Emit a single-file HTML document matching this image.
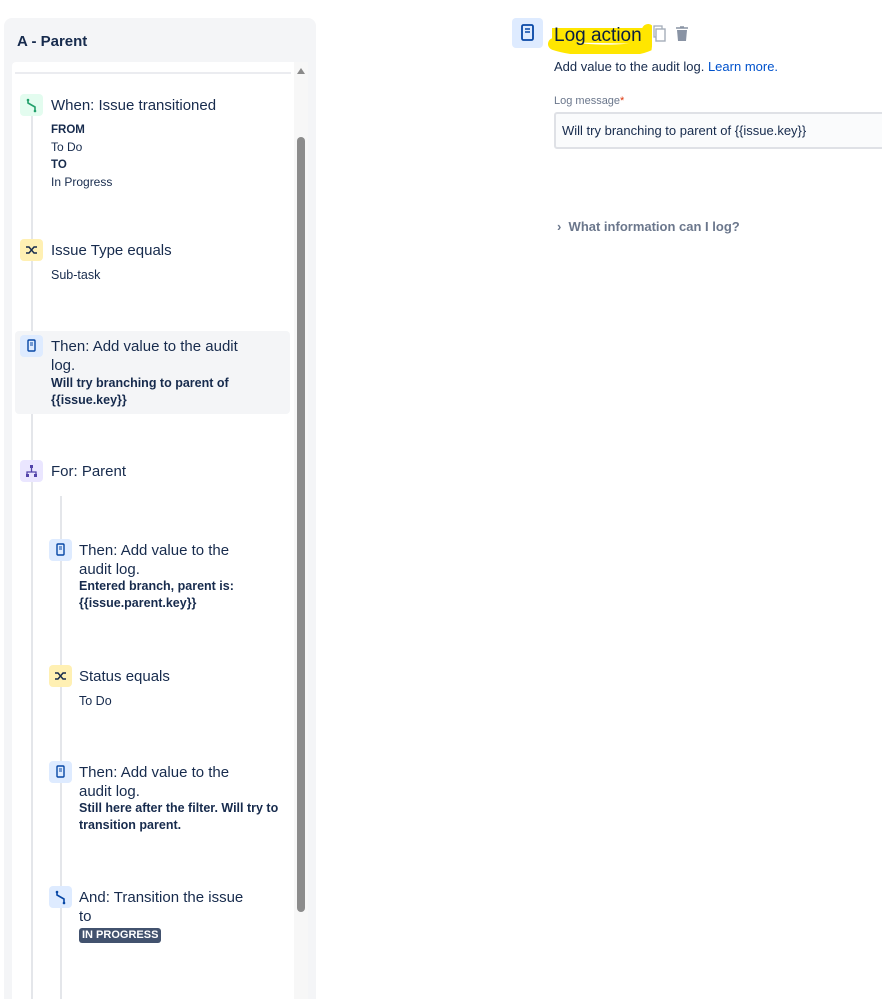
<!DOCTYPE html>
<html><head><style>
html,body{margin:0;width:882px;height:999px;overflow:hidden}
body{background:#fff;font-family:"Liberation Sans",Arial,sans-serif;color:#172b4d;position:relative}
.a{position:absolute}
.ic{position:absolute;width:23px;height:22px;border-radius:4px}
.t{position:absolute;font-size:15px;line-height:19px;color:#172b4d}
.s{position:absolute;font-size:12.5px;line-height:17px;color:#172b4d}
.b{font-weight:bold}
</style></head><body>
<div class="a" style="left:4px;top:18px;width:312px;height:981px;background:#f4f5f7;border-radius:8px 8px 0 0"></div>
<div class="a" style="left:17px;top:33px;font-size:15px;font-weight:bold;color:#172b4d">A - Parent</div>
<div class="a" style="left:12px;top:62px;width:296px;height:937px;background:#fff;border-radius:4px 0 0 0"></div>
<div class="a" style="left:15px;top:72px;width:276px;height:2px;background:#ebecf0"></div>
<div class="a" style="left:294px;top:62px;width:14px;height:937px;background:#f7f7f7"></div>
<div class="a" style="left:297px;top:68px;width:0;height:0;border-left:4px solid transparent;border-right:4px solid transparent;border-bottom:6px solid #8a8a8a"></div>
<div class="a" style="left:297px;top:137px;width:8px;height:775px;background:#8c8c8c;border-radius:4px"></div>
<div class="a" style="left:31px;top:112px;width:2px;height:887px;background:#e4e6ea"></div>
<div class="a" style="left:60px;top:496px;width:2px;height:503px;background:#e4e6ea"></div>
<div class="a" style="left:15px;top:331px;width:275px;height:83px;background:#f4f5f7;border-radius:4px"></div>

<div class="ic" style="left:20px;top:94px;background:#e3fcef"><svg width="23" height="22"><path d="M8 6v3l7 4v4" stroke="#22a06b" stroke-width="1.6" fill="none"/><circle cx="8" cy="6" r="1.3" fill="#22a06b"/><circle cx="15" cy="17" r="1.3" fill="#22a06b"/></svg></div>
<div class="t" style="left:51px;top:96px">When: Issue transitioned</div>
<div class="s" style="left:51px;top:121px;font-size:12px"><span class="b" style="font-size:11.5px">FROM</span><br>To Do<br><span class="b" style="font-size:11.5px">TO</span><br>In Progress</div>

<div class="ic" style="left:20px;top:239px;background:#fff0b3"><svg width="23" height="22"><path d="M6 8h3l5 6h3M6 14h3l5-6h3" stroke="#172b4d" stroke-width="1.4" fill="none"/></svg></div>
<div class="t" style="left:51px;top:241px">Issue Type equals</div>
<div class="s" style="left:51px;top:267px">Sub-task</div>

<div class="ic" style="left:20px;top:335px;background:#deebff"><svg width="23" height="22"><rect x="8" y="5" width="7" height="11" rx="1" stroke="#0747a6" stroke-width="1.4" fill="none"/><path d="M10 8h3M10 10h3" stroke="#0747a6" stroke-width="1"/></svg></div>
<div class="t" style="left:51px;top:337px;width:200px">Then: Add value to the audit log.</div>
<div class="s b" style="left:51px;top:375px;width:220px">Will try branching to parent of {{issue.key}}</div>

<div class="ic" style="left:20px;top:460px;background:#eae6ff"><svg width="23" height="22"><path d="M11.5 6v4M7 14v-2h9v2M11.5 10v2" stroke="#5243aa" stroke-width="1.3" fill="none"/><rect x="10" y="5" width="3" height="3" fill="#5243aa"/><rect x="6" y="14" width="3" height="3" fill="#5243aa"/><rect x="14" y="14" width="3" height="3" fill="#5243aa"/></svg></div>
<div class="t" style="left:51px;top:462px">For: Parent</div>

<div class="ic" style="left:49px;top:539px;background:#deebff"><svg width="23" height="22"><rect x="8" y="5" width="7" height="11" rx="1" stroke="#0747a6" stroke-width="1.4" fill="none"/><path d="M10 8h3M10 10h3" stroke="#0747a6" stroke-width="1"/></svg></div>
<div class="t" style="left:79px;top:541px;width:170px">Then: Add value to the audit log.</div>
<div class="s b" style="left:79px;top:578px;width:200px">Entered branch, parent is: {{issue.parent.key}}</div>

<div class="ic" style="left:49px;top:665px;background:#fff0b3"><svg width="23" height="22"><path d="M6 8h3l5 6h3M6 14h3l5-6h3" stroke="#172b4d" stroke-width="1.4" fill="none"/></svg></div>
<div class="t" style="left:79px;top:667px">Status equals</div>
<div class="s" style="left:79px;top:693px">To Do</div>

<div class="ic" style="left:49px;top:761px;background:#deebff"><svg width="23" height="22"><rect x="8" y="5" width="7" height="11" rx="1" stroke="#0747a6" stroke-width="1.4" fill="none"/><path d="M10 8h3M10 10h3" stroke="#0747a6" stroke-width="1"/></svg></div>
<div class="t" style="left:79px;top:763px;width:170px">Then: Add value to the audit log.</div>
<div class="s b" style="left:79px;top:800px;width:205px">Still here after the filter. Will try to transition parent.</div>

<div class="ic" style="left:49px;top:886px;background:#deebff"><svg width="23" height="22"><path d="M8 6v3l7 4v4" stroke="#0747a6" stroke-width="1.6" fill="none"/><circle cx="8" cy="6" r="1.3" fill="#0747a6"/><circle cx="15" cy="17" r="1.3" fill="#0747a6"/></svg></div>
<div class="t" style="left:79px;top:888px;width:170px">And: Transition the issue to</div>
<div class="a" style="left:79px;top:928px;background:#42526e;color:#fff;font-size:11px;font-weight:bold;padding:1px 3px;border-radius:3px;line-height:13px">IN PROGRESS</div>

<div class="a" style="left:512px;top:18px;width:31px;height:30px;background:#deebff;border-radius:4px"><svg width="31" height="30"><rect x="10" y="7" width="11" height="15" rx="1.5" stroke="#0747a6" stroke-width="1.8" fill="none"/><path d="M13 11h5M13 14h5" stroke="#0747a6" stroke-width="1.4"/></svg></div>
<svg class="a" style="left:548px;top:20px" width="104" height="34"><path d="M6 24 C30 32 80 33 98 26 L100 10" stroke="#ffe600" stroke-width="12" fill="none" stroke-linecap="round"/><path d="M4 8 L100 8 L100 24 L4 22Z" fill="#ffe600"/></svg>
<div class="a" style="left:554px;top:25px;font-size:19px;color:#091e42">Log action</div>
<svg class="a" style="left:652px;top:25px" width="40" height="18"><rect x="2" y="1" width="8" height="11" stroke="#a5adba" stroke-width="1.3" fill="none"/><rect x="4" y="4" width="9" height="12" stroke="#a5adba" stroke-width="1.4" fill="#fff"/><path d="M24 3h12M28 2h4" stroke="#8993a4" stroke-width="1.6"/><path d="M25 5h10l-1 11h-8z" fill="#8993a4"/></svg>
<div class="a" style="left:554px;top:59px;font-size:13px;color:#172b4d">Add value to the audit log. <span style="color:#0052cc">Learn more.</span></div>
<div class="a" style="left:554px;top:95px;font-size:11px;color:#6b778c">Log message<span style="color:#de350b">*</span></div>
<div class="a" style="left:554px;top:112px;width:340px;height:37px;background:#fafbfc;border:2px solid #dfe1e6;border-radius:3px;box-sizing:border-box"></div>
<div class="a" style="left:562px;top:123px;font-size:13px;color:#172b4d">Will try branching to parent of {{issue.key}}</div>
<div class="a" style="left:557px;top:219px;font-size:13px;color:#6b778c;font-weight:bold">›&nbsp; What information can I log?</div>
</body></html>
